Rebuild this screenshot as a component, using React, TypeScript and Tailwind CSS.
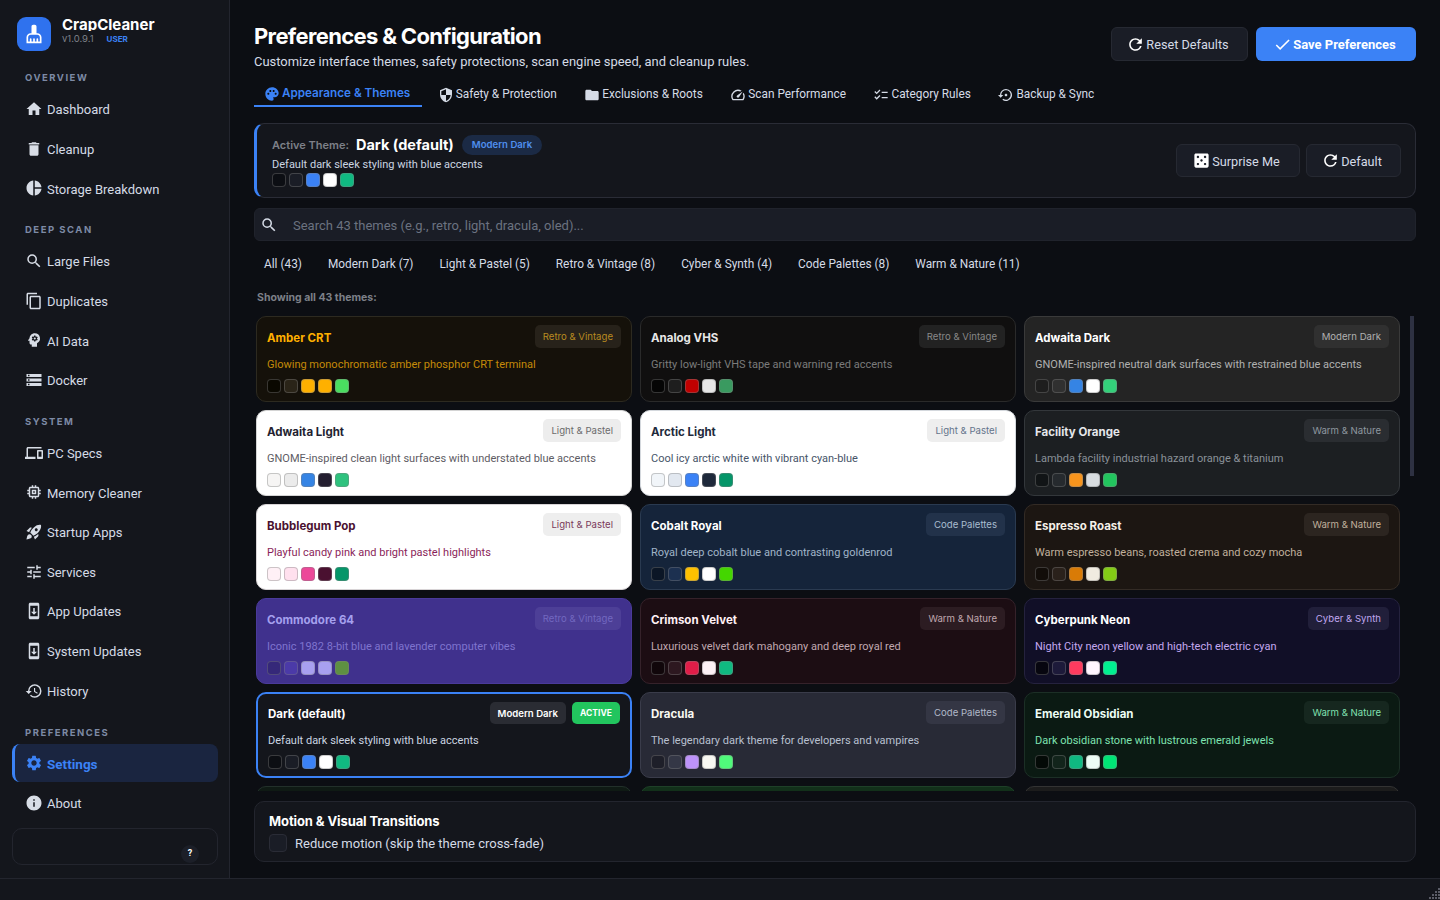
import type { ReactNode } from 'react';
import {
  MdCasino, MdCheck, MdChecklist, MdCleaningServices, MdContentCopy, MdDelete, MdDevices, MdFolder, MdHistory, MdHome,
  MdInfo, MdMemory, MdPalette, MdPieChart, MdPsychology, MdRefresh, MdRocketLaunch, MdSearch, MdSecurity, MdSettings,
  MdSettingsBackupRestore, MdSpeed, MdStorage, MdSystemUpdate, MdTune,
} from 'react-icons/md';

type Theme = {
  name: string;
  desc: string;
  tag: string;
  card: string;
  title: string;
  text: string;
  badge: string;
  swatches: string[];
  active?: boolean;
};

const navGroups = [
  { label: 'OVERVIEW', top: 'mt-[20px] mb-[5px]', items: [['Dashboard', MdHome], ['Cleanup', MdDelete], ['Storage Breakdown', MdPieChart]] },
  { label: 'DEEP SCAN', top: 'mt-[14px] mb-[5px]', items: [['Large Files', MdSearch], ['Duplicates', MdContentCopy], ['AI Data', MdPsychology], ['Docker', MdStorage]] },
  { label: 'SYSTEM', top: 'mt-[14px] mb-[5px]', items: [['PC Specs', MdDevices], ['Memory Cleaner', MdMemory], ['Startup Apps', MdRocketLaunch], ['Services', MdTune], ['App Updates', MdSystemUpdate], ['System Updates', MdSystemUpdate], ['History', MdHistory]] },
  { label: 'PREFERENCES', top: 'mt-[15px] mb-[4px]', items: [['Settings', MdSettings], ['About', MdInfo]] },
] as const;

const tabs = [
  ['Appearance & Themes', MdPalette],
  ['Safety & Protection', MdSecurity],
  ['Exclusions & Roots', MdFolder],
  ['Scan Performance', MdSpeed],
  ['Category Rules', MdChecklist],
  ['Backup & Sync', MdSettingsBackupRestore],
] as const;

const filters = ['All (43)', 'Modern Dark (7)', 'Light & Pastel (5)', 'Retro & Vintage (8)', 'Cyber & Synth (4)', 'Code Palettes (8)', 'Warm & Nature (11)'];

const themes: Theme[] = [
  {
    name: 'Amber CRT', desc: 'Glowing monochromatic amber phosphor CRT terminal', tag: 'Retro & Vintage',
    card: 'bg-[#15110a] border-[#2d2a20]', title: 'text-[#ffb000]', text: 'text-[#c48a08]', badge: 'bg-[#27221a] text-[#b88a20]',
    swatches: ['bg-[#0a0800]', 'bg-[#2a2418]', 'bg-[#ffb000]', 'bg-[#ffb000]', 'bg-[#4ade60]'],
  },
  {
    name: 'Analog VHS', desc: 'Gritty low-light VHS tape and warning red accents', tag: 'Retro & Vintage',
    card: 'bg-[#100f0f] border-[#2a2a2a]', title: 'text-[#e8e8e8]', text: 'text-[#7b7b7b]', badge: 'bg-[#222222] text-[#888888]',
    swatches: ['bg-[#050505]', 'bg-[#1e1e1e]', 'bg-[#c00000]', 'bg-[#e6e6e6]', 'bg-[#3a9a60]'],
  },
  {
    name: 'Adwaita Dark', desc: 'GNOME-inspired neutral dark surfaces with restrained blue accents', tag: 'Modern Dark',
    card: 'bg-[#242424] border-[#3a3a3a]', title: 'text-white', text: 'text-[#b0b0b0]', badge: 'bg-[#303030] text-[#b0b0b0]',
    swatches: ['bg-[#1e1e1e]', 'bg-[#303030]', 'bg-[#3584e4]', 'bg-white', 'bg-[#33d17a]'],
  },
  {
    name: 'Adwaita Light', desc: 'GNOME-inspired clean light surfaces with understated blue accents', tag: 'Light & Pastel',
    card: 'bg-white border-[#d4d4d4]', title: 'text-[#241f31]', text: 'text-[#5e5c64]', badge: 'bg-[#ededed] text-[#6b6b6b]',
    swatches: ['bg-[#f6f5f4]', 'bg-[#ebebeb]', 'bg-[#3584e4]', 'bg-[#241f31]', 'bg-[#2ec27e]'],
  },
  {
    name: 'Arctic Light', desc: 'Cool icy arctic white with vibrant cyan-blue', tag: 'Light & Pastel',
    card: 'bg-white border-[#d4d8dd]', title: 'text-[#1e293b]', text: 'text-[#475569]', badge: 'bg-[#eeeeee] text-[#64748b]',
    swatches: ['bg-[#f1f5f9]', 'bg-[#e2e8f0]', 'bg-[#3b82f6]', 'bg-[#1e293b]', 'bg-[#059669]'],
  },
  {
    name: 'Facility Orange', desc: 'Lambda facility industrial hazard orange & titanium', tag: 'Warm & Nature',
    card: 'bg-[#1c1f22] border-[#33373b]', title: 'text-[#e5e7eb]', text: 'text-[#8a9199]', badge: 'bg-[#2a2d31] text-[#8f98a0]',
    swatches: ['bg-[#111416]', 'bg-[#262a2e]', 'bg-[#f7941d]', 'bg-[#d8dce0]', 'bg-[#22c55e]'],
  },
  {
    name: 'Bubblegum Pop', desc: 'Playful candy pink and bright pastel highlights', tag: 'Light & Pastel',
    card: 'bg-white border-[#d8d4d6]', title: 'text-[#4a1030]', text: 'text-[#8a1f5a]', badge: 'bg-[#eeeeee] text-[#7a3a5a]',
    swatches: ['bg-[#fff0f6]', 'bg-[#ffe0ee]', 'bg-[#ec4899]', 'bg-[#4a1030]', 'bg-[#059669]'],
  },
  {
    name: 'Cobalt Royal', desc: 'Royal deep cobalt blue and contrasting goldenrod', tag: 'Code Palettes',
    card: 'bg-[#15243a] border-[#2a3a50]', title: 'text-white', text: 'text-[#a0b4c8]', badge: 'bg-[#22324a] text-[#a8bccf]',
    swatches: ['bg-[#0b1626]', 'bg-[#1c3050]', 'bg-[#ffc000]', 'bg-white', 'bg-[#44d600]'],
  },
  {
    name: 'Espresso Roast', desc: 'Warm espresso beans, roasted crema and cozy mocha', tag: 'Warm & Nature',
    card: 'bg-[#1c1612] border-[#332b25]', title: 'text-[#f5f0e8]', text: 'text-[#c0b09c]', badge: 'bg-[#2c2520] text-[#c0b09c]',
    swatches: ['bg-[#120d09]', 'bg-[#2a211b]', 'bg-[#d97b06]', 'bg-[#f0ebe0]', 'bg-[#84cc16]'],
  },
  {
    name: 'Commodore 64', desc: 'Iconic 1982 8-bit blue and lavender computer vibes', tag: 'Retro & Vintage',
    card: 'bg-[#40318d] border-[#4a3a9a]', title: 'text-[#a5a0ee]', text: 'text-[#7f74cf]', badge: 'bg-[#4d3f97] text-[#7268c0]',
    swatches: ['bg-[#352879]', 'bg-[#4b3aa8]', 'bg-[#a8a0f0]', 'bg-[#a8a0f0]', 'bg-[#5e9042]'],
  },
  {
    name: 'Crimson Velvet', desc: 'Luxurious velvet dark mahogany and deep royal red', tag: 'Warm & Nature',
    card: 'bg-[#1c0d13] border-[#35222a]', title: 'text-[#fff0f5]', text: 'text-[#c0a8b0]', badge: 'bg-[#2c1c22] text-[#c0a8b0]',
    swatches: ['bg-[#10060a]', 'bg-[#2d1820]', 'bg-[#e11d48]', 'bg-[#fdf0f5]', 'bg-[#10b981]'],
  },
  {
    name: 'Cyberpunk Neon', desc: 'Night City neon yellow and high-tech electric cyan', tag: 'Cyber & Synth',
    card: 'bg-[#110f27] border-[#25223e]', title: 'text-white', text: 'text-[#c4a8f0]', badge: 'bg-[#211f3a] text-[#c0a8f0]',
    swatches: ['bg-[#07060f]', 'bg-[#1d1a3a]', 'bg-[#ff3b5f]', 'bg-[#fff5ff]', 'bg-[#00f090]'],
  },
  {
    name: 'Dark (default)', desc: 'Default dark sleek styling with blue accents', tag: 'Modern Dark', active: true,
    card: 'bg-[#14161c] border-[#3b82f6]', title: 'text-white', text: 'text-[#cbd5e1]', badge: 'bg-[#2a2c33] text-white font-semibold',
    swatches: ['bg-[#0c0e13]', 'bg-[#1a1d26]', 'bg-[#3b82f6]', 'bg-white', 'bg-[#10b981]'],
  },
  {
    name: 'Dracula', desc: 'The legendary dark theme for developers and vampires', tag: 'Code Palettes',
    card: 'bg-[#282a36] border-[#3a3c4a]', title: 'text-[#f8f8f2]', text: 'text-[#b8c0d0]', badge: 'bg-[#343644] text-[#b0b8c8]',
    swatches: ['bg-[#1e1f29]', 'bg-[#343746]', 'bg-[#bd93f9]', 'bg-[#f8f8f2]', 'bg-[#50fa7b]'],
  },
  {
    name: 'Emerald Obsidian', desc: 'Dark obsidian stone with lustrous emerald jewels', tag: 'Warm & Nature',
    card: 'bg-[#0b1a13] border-[#1c2f26]', title: 'text-[#ecfdf5]', text: 'text-[#7ee2b0]', badge: 'bg-[#16271f] text-[#80e0b0]',
    swatches: ['bg-[#040a07]', 'bg-[#12241b]', 'bg-[#10b981]', 'bg-[#ecfdf5]', 'bg-[#00e676]'],
  },
];

// next row, only its top edge shows above the fold
const clippedCards = ['bg-[#0f1a14] border-[#22302a]', 'bg-[#12301a] border-[#1e4028]', 'bg-[#1c1c1c] border-[#333333]'];

function Swatches({ colors }: { colors: string[] }) {
  return (
    <div className="flex gap-[3px]">
      {colors.map((color, index) => (
        <span key={index} className={`h-[14px] w-[14px] rounded-[4px] border border-[#80808066] ${color}`} />
      ))}
    </div>
  );
}

function NavItem({ label, icon }: { label: string; icon: ReactNode }) {
  const active = label === 'Settings';
  return (
    <div className={`mb-[1.67px] flex h-[38px] items-center gap-[4px] rounded-lg ${active ? 'border-l-[3px] border-[#3b82f6] bg-[#1a2540] pl-[10px] text-[13.5px] font-bold text-[#3b82f6]' : 'pl-[13px] text-[13px] text-[#d5dbe6]'}`}>
      <span className={`flex w-[18px] justify-center text-[18px] ${active ? 'text-[#3b82f6]' : 'text-[#d8dde6]'}`}>{icon}</span>
      <span className="pt-[2px]">{label}</span>
    </div>
  );
}

function Sidebar() {
  return (
    <aside className="flex w-[230px] shrink-0 flex-col border-r border-[#23252e] bg-[#14161c] pr-[11px] pl-3">
      <div className="mt-[17px] flex h-[34px] items-start gap-[11px] pl-[5px]">
        <div className="flex h-[34px] w-[34px] items-center justify-center rounded-[9px] bg-[#2f72ee] text-[20px] text-white">
          <MdCleaningServices />
        </div>
        <div className="-mt-[1px] font-['Inter',sans-serif]">
          <div className="h-[15px] overflow-hidden text-[15px] leading-[17px] font-bold text-white">CrapCleaner</div>
          <div className="mt-[2px] flex items-center gap-[13px] text-[9.5px] leading-[12px] text-[#7d8088]">
            <span>v1.0.9.1</span>
            <span className="text-[8px] font-bold text-[#3b82f6]">USER</span>
          </div>
        </div>
      </div>
      {navGroups.map((group) => (
        <div key={group.label}>
          <div className={`h-[14px] pl-[13px] font-['Inter',sans-serif] text-[9.5px] leading-[14px] font-bold tracking-[1.5px] text-[#7d8aa5] ${group.top}`}>{group.label}</div>
          {group.items.map(([label, Icon]) => (
            <NavItem key={label} label={label} icon={<Icon />} />
          ))}
        </div>
      ))}
      <div className="mt-[4px] flex h-[37px] items-end justify-end rounded-[10px] border border-[#23252e] pr-[18px] pb-[1px]">
        <span className="flex h-[18px] w-[18px] items-center justify-center rounded-full bg-[#1c1f28] text-[9px] font-bold text-white">?</span>
      </div>
    </aside>
  );
}

function ThemeCard({ theme }: { theme: Theme }) {
  return (
    <div className={`h-[86px] rounded-[10px] px-[10px] pt-[8px] ${theme.active ? 'border-2' : 'border'} ${theme.card}`}>
      <div className={`flex items-center justify-between ${theme.active ? 'h-[22px]' : 'h-[23px]'}`}>
        <span className={`pt-[4px] font-['Inter',sans-serif] text-[11.5px] font-bold ${theme.title}`}>{theme.name}</span>
        <div className="flex gap-[6px]">
          <span className={`flex items-center rounded-[5px] px-2 pt-[2px] font-['Inter',sans-serif] text-[9.6px] ${theme.active ? 'h-[22px]' : 'h-[23px]'} ${theme.badge}`}>{theme.tag}</span>
          {theme.active ? <span className="flex h-[22px] w-[48px] items-center justify-center rounded-[5px] bg-[#22c55e] font-['Inter',sans-serif] text-[8.5px] font-bold text-white">ACTIVE</span> : null}
        </div>
      </div>
      <p className={`mt-[10px] mb-[7px] text-[11px] leading-[14px] ${theme.text}`}>{theme.desc}</p>
      <Swatches colors={theme.swatches} />
    </div>
  );
}

function OutlineButton({ icon, label, className }: { icon: ReactNode; label: string; className: string }) {
  return (
    <button className={`flex items-center justify-center gap-[1px] rounded-md border border-[#262932] bg-[#1a1d26] pr-[4px] text-[12.7px] text-[#d5dbe6] ${className}`}>
      <span className="text-[19px] text-white">{icon}</span>
      <span className="pt-[2px]">{label}</span>
    </button>
  );
}

export default function App() {
  return (
    <div className="flex h-screen w-full flex-col overflow-hidden bg-[#0c0e13] font-['Roboto',sans-serif] text-white">
      <div className="flex min-h-0 flex-1">
        <Sidebar />
        <main className="flex min-w-0 flex-1 flex-col px-6">
          <div className="mt-[27px] flex h-[42px] items-start justify-between">
            <div>
              <h1 className="-mt-[4px] font-['Inter',sans-serif] text-[22px] leading-[27px] font-bold tracking-[-0.65px] text-white">Preferences &amp; Configuration</h1>
              <p className="mt-[3px] text-[12.95px] leading-[17px] text-[#d5dbe6]">Customize interface themes, safety protections, scan engine speed, and cleanup rules.</p>
            </div>
            <div className="flex gap-2">
              <OutlineButton icon={<MdRefresh />} label="Reset Defaults" className="h-[34px] w-[137px]" />
              <button className="flex h-[34px] w-[160px] items-center justify-center gap-[1px] rounded-md bg-[#3b82f6] pr-[3px] text-[13px] font-bold text-white">
                <MdCheck className="text-[19px]" />
                <span className="pt-[2px]">Save Preferences</span>
              </button>
            </div>
          </div>

          <div className="mt-[12px] flex h-[26px] gap-[5.5px]">
            {tabs.map(([label, Icon], index) => (
              <div key={label} className={`flex items-center gap-[2px] pt-[1px] pr-3 pl-[10px] ${index === 0 ? "border-b-2 border-[#3b82f6] font-['Inter',sans-serif] text-[11.7px] font-semibold text-[#3b82f6]" : 'text-[11.85px] text-[#d5dbe6]'}`}>
                <Icon className="text-[16px]" />
                {label}
              </div>
            ))}
          </div>

          <div className="mt-[16px] flex h-[75px] shrink-0 items-center justify-between rounded-[10px] border border-l-[3px] border-[#2a2c36] border-l-[#3b82f6] bg-[#14161c] pr-[14px] pl-[15px]">
            <div>
              <div className="flex h-[20px] items-center pt-[1px]">
                <span className="font-['Inter',sans-serif] text-[11px] font-semibold text-[#7d8088]">Active Theme:</span>
                <span className="ml-[7px] font-['Inter',sans-serif] text-[14.5px] font-bold text-white">Dark (default)</span>
                <span className="ml-[8px] flex h-[20px] items-center rounded-full bg-[#1b2a45] px-[10px] font-['Inter',sans-serif] text-[9.6px] font-semibold text-[#4f8fee]">Modern Dark</span>
              </div>
              <p className="mt-[3px] mb-[1px] text-[11px] leading-[14px] text-[#cbd5e1]">Default dark sleek styling with blue accents</p>
              <Swatches colors={['bg-[#0c0e13]', 'bg-[#1a1d26]', 'bg-[#3b82f6]', 'bg-white', 'bg-[#10b981]']} />
            </div>
            <div className="flex gap-[6px]">
              <OutlineButton icon={<MdCasino />} label="Surprise Me" className="h-[33px] w-[124px]" />
              <OutlineButton icon={<MdRefresh />} label="Default" className="h-[33px] w-[95px]" />
            </div>
          </div>

          <div className="mt-[10px] flex h-[33px] shrink-0 items-center rounded-md border border-[#20232c] bg-[#1a1d26] pl-[5px] text-[13px] text-[#6b7280]">
            <MdSearch className="mr-[15px] text-[18px] text-[#d5dbe6]" />
            <span className="pt-[2px]">Search 43 themes (e.g., retro, light, dracula, oled)...</span>
          </div>

          <div className="mt-[10px] flex h-[26px] shrink-0 gap-[6px] pt-[1px]">
            {filters.map((filter) => (
              <span key={filter} className="flex items-center px-[10px] text-[11.85px] text-[#d5dbe6]">{filter}</span>
            ))}
          </div>

          <div className="mt-[14px] h-[14px] shrink-0 pl-[3px] font-['Inter',sans-serif] text-[10.5px] leading-[14px] font-bold text-[#7d8088]">Showing all 43 themes:</div>

          <div className="mt-[11px] flex min-h-0 flex-1 overflow-hidden pl-[2px]">
            <div className="grid w-[1144px] shrink-0 grid-cols-3 content-start gap-2">
              {themes.map((theme) => (
                <ThemeCard key={theme.name} theme={theme} />
              ))}
              {clippedCards.map((card) => (
                <div key={card} className={`h-[86px] rounded-[10px] border ${card}`} />
              ))}
            </div>
            <div className="ml-[10px] h-[160px] w-[4px] bg-[#2e3142]" />
          </div>

          <div className="mt-[10px] mb-[16px] h-[61px] shrink-0 rounded-[10px] border border-[#23252e] bg-[#14161c] pt-[10px] pl-[14px]">
            <div className="font-['Inter',sans-serif] text-[13px] leading-[18px] font-bold tracking-[-0.1px] text-white">Motion &amp; Visual Transitions</div>
            <label className="mt-[3px] flex items-center gap-2 text-[13px] text-[#d5dbe6]">
              <span className="h-[18px] w-[18px] rounded-[4px] border border-[#2a2c36] bg-[#1a1d26]" />
              <span className="pt-[1px]">Reduce motion (skip the theme cross-fade)</span>
            </label>
          </div>
        </main>
      </div>
      <footer className="flex h-[22px] shrink-0 items-end justify-end border-t border-[#23252e] bg-[#14161c]">
        <svg width="12" height="12" viewBox="0 0 12 12" fill="#5a5c66">
          <rect x="10" y="0" width="2" height="2" />
          <rect x="7" y="3" width="2" height="2" />
          <rect x="10" y="3" width="2" height="2" />
          <rect x="4" y="6" width="2" height="2" />
          <rect x="7" y="6" width="2" height="2" />
          <rect x="10" y="6" width="2" height="2" />
          <rect x="1" y="9" width="2" height="2" />
          <rect x="4" y="9" width="2" height="2" />
          <rect x="7" y="9" width="2" height="2" />
          <rect x="10" y="9" width="2" height="2" />
        </svg>
      </footer>
    </div>
  );
}
